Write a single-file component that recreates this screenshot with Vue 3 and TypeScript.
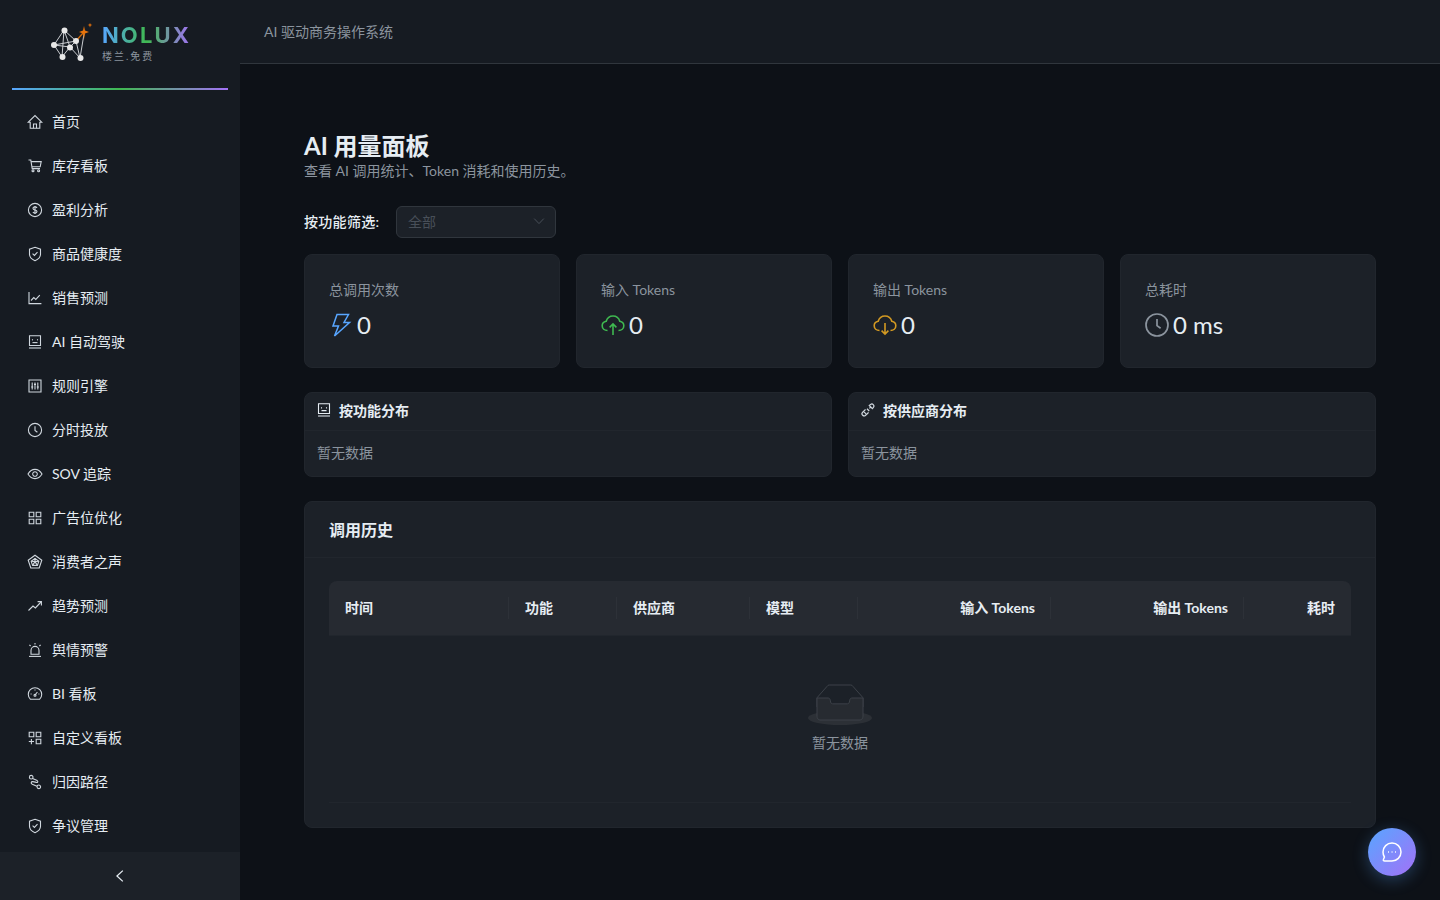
<script setup lang="ts">
interface NavItem { label: string; icon: string[] }
const C = (x: number, y: number, r: number) => `M${x - r} ${y}a${r} ${r} 0 1 0 ${2 * r} 0a${r} ${r} 0 1 0 ${-2 * r} 0`

const shield = ['M8 1.3 13.5 3.2V8.2C13.5 11 11 13.4 8 14.7 5 13.4 2.5 11 2.5 8.2V3.2Z', 'M5.6 7.7 7.4 9.5 10.5 6.2']
const robot = ['M2.5 1.8H13.5V11.5H2.5Z', 'M2 14H14', 'M5.5 5.2V6.4', 'M10.5 5.2V6.4', 'M5.5 8.6H10.5']

const nav: NavItem[] = [
  { label: '首页', icon: ['M1.3 8.2 8 1.6 14.7 8.2H12.8V14.2H3.2V8.2Z', 'M6.5 14.2V10H9.5V14.2'] },
  { label: '库存看板', icon: ['M1.5 2H3.8L5.2 10.6H13', 'M4.1 3.6H14.2L13.2 8.8H5', C(6, 12.8, 1), C(11.6, 12.8, 1)] },
  { label: '盈利分析', icon: [C(8, 8, 6.6), 'M10 5.9C9.5 5.1 8.8 4.9 8 4.9 6.9 4.9 6 5.4 6 6.4 6 8.6 10 7.3 10 9.6 10 10.6 9 11.1 8 11.1 7.1 11.1 6.3 10.7 5.9 10', 'M8 3.9V12.1'] },
  { label: '商品健康度', icon: shield },
  { label: '销售预测', icon: ['M2 2V13.6H14.4', 'M4 10.5 6.8 7.6 8.8 9.4 12.8 5.2'] },
  { label: 'AI 自动驾驶', icon: robot },
  { label: '规则引擎', icon: ['M2 2H14V14H2Z', 'M5.2 4.4V11.6', 'M8 4.4V11.6', 'M10.8 4.4V11.6', 'M4.2 9H6.2', 'M7 6.4H9', 'M9.8 9H11.8'] },
  { label: '分时投放', icon: [C(8, 8, 6.6), 'M8 4.2V8.4L10.4 10.2'] },
  { label: 'SOV 追踪', icon: ['M1 8C2.8 5 5.1 3.4 8 3.4S13.2 5 15 8C13.2 11 10.9 12.6 8 12.6S2.8 11 1 8Z', C(8, 8, 2.3)] },
  { label: '广告位优化', icon: ['M2.2 2.2H6.8V6.8H2.2Z', 'M9.2 2.2H13.8V6.8H9.2Z', 'M2.2 9.2H6.8V13.8H2.2Z', 'M9.2 9.2H13.8V13.8H9.2Z'] },
  { label: '消费者之声', icon: ['M8 1.3 14.8 6.2 12.2 14H3.8L1.2 6.2Z', 'M8 4.4 11.8 7.2 10.4 11.4H5.6L4.2 7.2Z', 'M8 4.4V7.6', 'M4.2 7.2 8 7.6 11.8 7.2', 'M5.6 11.4 8 7.6 10.4 11.4'] },
  { label: '趋势预测', icon: ['M1.5 12.5 6 8 8.4 10 14 4', 'M10.6 3.6H14.4V7.4'] },
  { label: '舆情预警', icon: ['M2 14.4H14', 'M4 12.2V8.4A4 4 0 0 1 12 8.4V12.2Z', 'M8 1V2.6', 'M2.4 2.8 3.6 4', 'M13.6 2.8 12.4 4'] },
  { label: 'BI 看板', icon: ['M3.3 13.2A6.7 6.7 0 1 1 12.7 13.2Z', 'M8 9 10.4 6', 'M3.6 8H4.6', 'M11.4 8H12.4', 'M8 3.4V4.4', C(8, 9.2, 1)] },
  { label: '自定义看板', icon: ['M2.2 2.2H6.8V6.8H2.2Z', 'M9.2 2.2H13.8V6.8H9.2Z', 'M9.2 9.2H13.8V13.8H9.2Z', 'M1.8 11.5H7', 'M4.4 9V14.2'] },
  { label: '归因路径', icon: [C(4.2, 3.2, 1.8), C(11.8, 12.8, 1.8), 'M5.6 4.4 10.2 6.6C11.4 7.4 10.6 8.8 9.4 8.4L5.8 7.6C4 7.4 3.6 9.6 5.2 10.2L10 12.2'] },
  { label: '争议管理', icon: shield },
]

const stats = [
  { label: '总调用次数', value: '0', color: '#58a6ff', kind: 'bolt' },
  { label: '输入 Tokens', value: '0', color: '#3fb950', kind: 'up' },
  { label: '输出 Tokens', value: '0', color: '#d29922', kind: 'down' },
  { label: '总耗时', value: '0 ms', color: '#8b949e', kind: 'clock' },
]

const columns = [
  { label: '时间', width: 180, right: false },
  { label: '功能', width: 108, right: false },
  { label: '供应商', width: 133, right: false },
  { label: '模型', width: 108, right: false },
  { label: '输入 Tokens', width: 193, right: true },
  { label: '输出 Tokens', width: 193, right: true },
  { label: '耗时', width: 107, right: true },
]
</script>

<template>
  <div class="shell">
    <aside class="side">
      <div class="brand">
        <svg class="brand-mark" viewBox="0 0 44 42" width="44" height="42" fill="none">
          <path d="M14 8 4 23 12 35 20 25 14 8 12 35M14 8 26 19 4 23 20 25 30 36 26 19 20 25M30 36 34 12" stroke="#c9ccd0" stroke-width="1" />
          <path d="M26 19 33 11" stroke="#d46b08" stroke-width="1.4" />
          <g fill="#e8e8e8">
            <circle cx="14.5" cy="8.5" r="3" />
            <circle cx="4" cy="23" r="3" />
            <circle cx="12.5" cy="35" r="3" />
            <circle cx="26" cy="19" r="3" />
            <circle cx="20" cy="25.5" r="3" />
            <circle cx="30.5" cy="36" r="3" />
          </g>
          <path d="M34 4 35 8.5 39 10 35 11.5 34 17 33 11.5 29 10 33 8.5Z" fill="#e8740c" />
          <path d="M40 1 40.7 2.4 42.4 3 40.7 3.6 40 5.4 39.3 3.6 37.6 3 39.3 2.4Z" fill="#e8740c" />
        </svg>
        <div class="brand-text">
          <div class="brand-name">NOLUX</div>
          <div class="brand-sub">楼兰.免费</div>
        </div>
      </div>
      <div class="brand-rule"></div>
      <nav class="menu">
        <a v-for="item in nav" :key="item.label" class="menu-item">
          <svg class="menu-icon" viewBox="0 0 16 16" width="16" height="16" fill="none">
            <path v-for="(d, i) in item.icon" :key="i" :d="d" />
          </svg>
          <span>{{ item.label }}</span>
        </a>
      </nav>
      <div class="collapse">
        <svg viewBox="0 0 12 12" width="14" height="14" fill="none" stroke="#e6edf3" stroke-width="1.1">
          <path d="M8.4 1.4 3.4 6 8.4 10.6" />
        </svg>
      </div>
    </aside>

    <div class="main">
      <header class="top">AI 驱动商务操作系统</header>
      <main class="content">
        <h1 class="title">AI 用量面板</h1>
        <p class="subtitle">查看 AI 调用统计、Token 消耗和使用历史。</p>

        <div class="filter">
          <span class="filter-label">按功能筛选:</span>
          <div class="select">
            <span>全部</span>
            <svg viewBox="0 0 12 12" width="12" height="12" fill="none" stroke="#484f58" stroke-width="1">
              <path d="M1.2 3.6 6 8.6 10.8 3.6" />
            </svg>
          </div>
        </div>

        <section class="stats">
          <div v-for="s in stats" :key="s.label" class="stat">
            <div class="stat-label">{{ s.label }}</div>
            <div class="stat-value">
              <svg v-if="s.kind === 'bolt'" class="stat-icon" viewBox="0 0 24 24" width="24" height="24" fill="none" :stroke="s.color" stroke-width="1.5">
                <path d="M8 1.5H19.5L15 9.5H20.5L5.5 23 9.5 13H4Z" />
              </svg>
              <svg v-else-if="s.kind === 'up' || s.kind === 'down'" class="stat-icon" viewBox="0 0 24 24" width="24" height="24" fill="none" :stroke="s.color" stroke-width="1.6">
                <path d="M6.5 17.5C3.5 17.5 1.2 15.6 1.2 12.8 1.2 10.4 3 8.6 5.2 8.2 6.2 5 8.8 3 12 3S17.8 5 18.8 8.2C21 8.6 22.8 10.4 22.8 12.8 22.8 15.6 20.5 17.5 17.5 17.5" />
                <path v-if="s.kind === 'up'" d="M12 22V11M8.6 14.4 12 11 15.4 14.4" />
                <path v-else d="M12 10V21M8.6 17.6 12 21 15.4 17.6" />
              </svg>
              <svg v-else class="stat-icon" viewBox="0 0 24 24" width="24" height="24" fill="none" :stroke="s.color" stroke-width="1.7">
                <circle cx="12" cy="12" r="11" />
                <path d="M12 6V12.6L15.6 15.2" />
              </svg>
              <span>{{ s.value }}</span>
            </div>
          </div>
        </section>

        <section class="panels">
          <div class="panel">
            <div class="panel-head">
              <svg viewBox="1 1 14 14" width="14" height="14" fill="none" stroke="#e6edf3" stroke-width="1.1">
                <path d="M2.5 1.8H13.5V11.5H2.5Z M2 14H14 M5.5 5.2V6.4 M10.5 5.2V6.4 M5.5 8.6H10.5" />
              </svg>
              <span>按功能分布</span>
            </div>
            <div class="panel-body">暂无数据</div>
          </div>
          <div class="panel">
            <div class="panel-head">
              <svg viewBox="0 0 16 16" width="14" height="14" fill="none" stroke="#d0d7de" stroke-width="1.4">
                <path d="M9.5 2.8 11 1.6C12 .8 13.2 1 14 1.9 14.9 2.8 15 4 14.2 5L13 6.4 9.5 2.8Z M6.4 13 5 14.2C4 15 2.8 14.9 1.9 14 1 13.2.8 12 1.6 11L2.8 9.5 6.4 13Z M5.2 7.4 3.4 9 M8.6 10.8 7 12.6 M6.8 6.6 9.4 9.2 M9.6 6.2 11.2 4.6" />
              </svg>
              <span>按供应商分布</span>
            </div>
            <div class="panel-body">暂无数据</div>
          </div>
        </section>

        <section class="history">
          <div class="history-head">调用历史</div>
          <div class="history-body">
            <table class="table">
              <colgroup>
                <col v-for="c in columns" :key="c.label" :style="{ width: c.width + 'px' }" />
              </colgroup>
              <thead>
                <tr>
                  <th v-for="c in columns" :key="c.label" :class="{ right: c.right }">{{ c.label }}</th>
                </tr>
              </thead>
              <tbody>
                <tr>
                  <td :colspan="columns.length" class="empty-cell">
                    <svg width="64" height="41" viewBox="0 0 64 41" class="empty-img">
                      <g transform="translate(0 1)" fill="none" fill-rule="evenodd">
                        <ellipse fill="#2c3036" cx="32" cy="33" rx="32" ry="7" />
                        <g fill-rule="nonzero" stroke="#3c4148">
                          <path d="M55 12.76L44.854 1.258C44.367.474 43.656 0 42.907 0H21.093c-.749 0-1.46.474-1.947 1.257L9 12.761V22h46v-9.24z" />
                          <path d="M41.613 15.931c0-1.605.994-2.93 2.227-2.931H55v18.137C55 33.26 53.68 35 52.05 35h-40.1C10.32 35 9 33.259 9 31.137V13h11.16c1.233 0 2.227 1.323 2.227 2.928v.022c0 1.605 1.005 2.901 2.237 2.901h14.752c1.232 0 2.237-1.308 2.237-2.913v-.007z" fill="#272b31" />
                        </g>
                      </g>
                    </svg>
                    <div class="empty-text">暂无数据</div>
                  </td>
                </tr>
              </tbody>
            </table>
          </div>
        </section>
      </main>
    </div>

    <button class="fab" type="button" aria-label="chat">
      <svg viewBox="0 0 24 24" width="24" height="24" fill="none" stroke="#fff" stroke-width="1.5">
        <path d="M3 12A9 9 0 1 1 12 21H4.6C3.6 21 3 20.4 3.4 19.5L4.4 17C3.5 15.6 3 13.9 3 12Z" />
        <path d="M8 12H8.9M11.6 12H12.5M15.1 12H16" stroke-width="1.6" />
      </svg>
    </button>
  </div>
</template>

<style>
html, body { margin: 0; background: #0d1117; }
</style>

<style scoped>
.shell {
  display: flex;
  height: 100vh;
  overflow: hidden;
  background: #0d1117;
  color: #e6edf3;
  font-family: Lato, "Noto Sans CJK SC", sans-serif;
  font-size: 14px;
}
.side {
  width: 240px;
  flex: none;
  display: flex;
  flex-direction: column;
  background: #161b22;
}
.brand {
  height: 88px;
  display: flex;
  align-items: flex-start;
  padding: 22px 0 0 50px;
  box-sizing: border-box;
  gap: 8px;
}
.brand-name {
  font-family: Inter, "Noto Sans", sans-serif;
  font-size: 22px;
  line-height: 27px;
  font-weight: 700;
  letter-spacing: 2.1px;
  background: linear-gradient(90deg, #58a6ff, #3fb950 50%, #a371f7);
  -webkit-background-clip: text;
  background-clip: text;
  color: transparent;
}
.brand-sub {
  margin-top: 1px;
  font-size: 10px;
  line-height: 12px;
  letter-spacing: 2px;
  color: #8b949e;
}
.brand-rule {
  height: 2px;
  margin: 0 12px;
  background: linear-gradient(90deg, #58a6ff, #3fb950 50%, #a371f7);
}
.menu {
  flex: 1;
  min-height: 0;
  overflow: hidden;
  padding-top: 10px;
}
.menu-item {
  height: 44px;
  display: flex;
  align-items: center;
  gap: 9px;
  padding-left: 27px;
  color: #e6edf3;
  line-height: 22px;
}
.menu-icon {
  flex: none;
  stroke: #d0d7de;
  stroke-width: 1.1;
}
.collapse {
  height: 48px;
  flex: none;
  background: #1c2128;
  display: flex;
  align-items: center;
  justify-content: center;
}
.main {
  flex: 1;
  min-width: 0;
  display: flex;
  flex-direction: column;
}
.top {
  height: 64px;
  box-sizing: border-box;
  flex: none;
  display: flex;
  align-items: center;
  padding: 0 0 1px 24px;
  background: #161b22;
  border-bottom: 1px solid #30363d;
  color: #8b949e;
}
.content {
  flex: 1;
  min-height: 0;
  padding: 66px 64px 0;
}
.title {
  margin: 0;
  font-size: 24px;
  line-height: 32px;
  font-weight: 700;
  color: #e6edf3;
}
.subtitle {
  margin: 1px 0 0;
  line-height: 16px;
  color: #8b949e;
}
.filter {
  margin-top: 27px;
  display: flex;
  align-items: center;
  gap: 16px;
}
.filter-label {
  width: 76px;
  flex: none;
  white-space: nowrap;
  font-weight: 500;
  letter-spacing: 0.3px;
  line-height: 32px;
  color: #e6edf3;
}
.select {
  width: 160px;
  height: 32px;
  box-sizing: border-box;
  display: flex;
  align-items: center;
  justify-content: space-between;
  padding: 0 10px 2px 11px;
  background: #1c2128;
  border: 1px solid #30363d;
  border-radius: 6px;
  color: #484f58;
}
.stats {
  margin-top: 16px;
  display: grid;
  grid-template-columns: repeat(4, 1fr);
  gap: 16px;
}
.stat {
  box-sizing: border-box;
  height: 114px;
  padding: 24px;
  background: #1c2128;
  border: 1px solid #21262d;
  border-radius: 8px;
}
.stat-label {
  line-height: 22px;
  color: #8b949e;
}
.stat-value {
  margin-top: 4px;
  height: 38px;
  display: flex;
  align-items: center;
  gap: 4px;
  font-size: 24px;
  color: #e6edf3;
}
.stat-icon { flex: none; margin-top: 2px; }
.panels {
  margin-top: 24px;
  display: grid;
  grid-template-columns: repeat(2, 1fr);
  gap: 16px;
}
.panel {
  background: #1c2128;
  border: 1px solid #21262d;
  border-radius: 8px;
}
.panel-head {
  height: 38px;
  box-sizing: border-box;
  display: flex;
  align-items: center;
  gap: 8px;
  padding: 0 12px 4px;
  border-bottom: 1px solid #21262d;
  font-weight: 700;
}
.panel-body {
  padding: 11px 12px 12px;
  line-height: 22px;
  color: #8b949e;
}
.history {
  margin-top: 24px;
  background: #1c2128;
  border: 1px solid #21262d;
  border-radius: 8px;
}
.history-head {
  height: 56px;
  box-sizing: border-box;
  display: flex;
  align-items: center;
  padding: 0 24px 2px;
  border-bottom: 1px solid #21262d;
  font-size: 16px;
  font-weight: 700;
}
.history-body { padding: 23px 24px 24px; }
.table {
  width: 100%;
  table-layout: fixed;
  border-collapse: separate;
  border-spacing: 0;
}
.table th {
  position: relative;
  height: 55px;
  padding: 0 16px 2px;
  box-sizing: border-box;
  background: #262a31;
  text-align: left;
  font-weight: 700;
  color: #e6edf3;
  border-bottom: 1px solid #21262d;
}
.table th.right { text-align: right; }
.table th:first-child { border-top-left-radius: 8px; }
.table th:last-child { border-top-right-radius: 8px; }
.table th:not(:last-child)::before {
  content: "";
  position: absolute;
  top: 50%;
  right: 0;
  width: 1px;
  height: 22px;
  transform: translateY(-50%);
  background: #2d3138;
}
.empty-cell {
  height: 167px;
  box-sizing: border-box;
  padding: 48px 0 0;
  text-align: center;
  vertical-align: top;
  border-bottom: 1px solid #21262d;
}
.empty-img { display: block; margin: 0 auto; }
.empty-text {
  margin-top: 7px;
  line-height: 22px;
  color: #8b949e;
}
.fab {
  position: fixed;
  right: 24px;
  bottom: 24px;
  width: 48px;
  height: 48px;
  padding: 0;
  border: none;
  border-radius: 50%;
  display: flex;
  align-items: center;
  justify-content: center;
  background: linear-gradient(135deg, #58a6ff, #a371f7);
  box-shadow: 0 4px 16px rgba(88, 166, 255, 0.3);
}
</style>
